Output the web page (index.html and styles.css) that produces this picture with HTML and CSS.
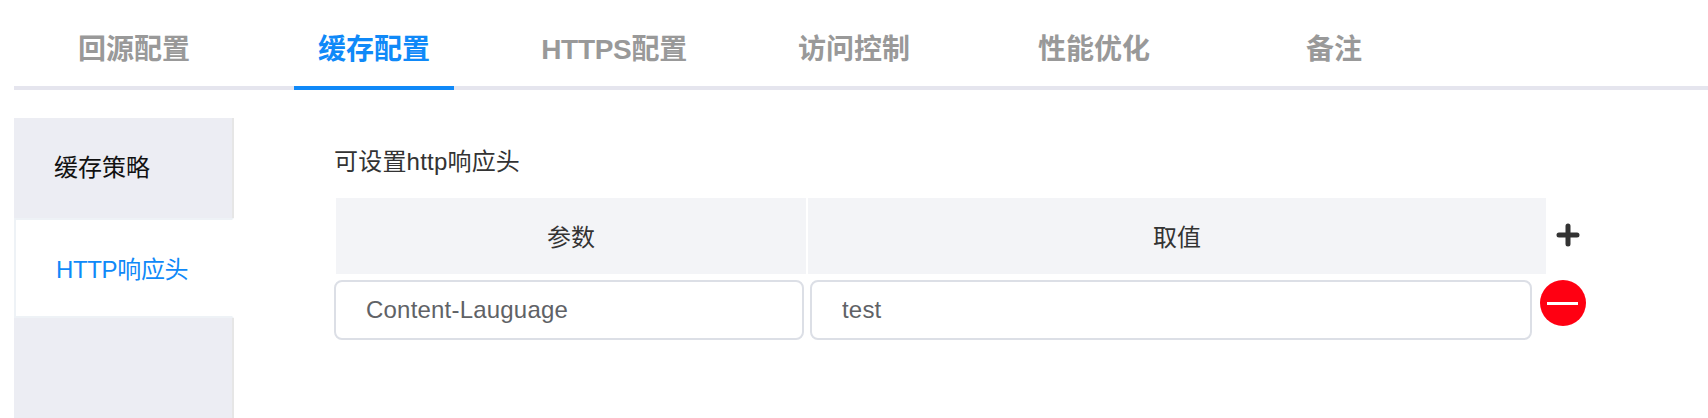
FILE: index.html
```
<!DOCTYPE html>
<html lang="zh-CN">
<head>
  <meta charset="UTF-8" />
  <meta name="viewport" content="width=device-width, initial-scale=1" />
  <title>缓存配置</title>
  <link rel="stylesheet" href="styles.css">
</head>
<body>

  <nav class="tabs">
    <a class="tab"><span>回源配置</span></a>
    <a class="tab active"><span>缓存配置</span></a>
    <a class="tab tab-https"><span>HTTPS配置</span></a>
    <a class="tab"><span>访问控制</span></a>
    <a class="tab"><span>性能优化</span></a>
    <a class="tab"><span>备注</span></a>
  </nav>

  <div class="main">
    <ul class="side-menu">
      <li class="side-item">缓存策略</li>
      <li class="side-item active">HTTP响应头</li>
    </ul>

    <div class="content">
      <p class="title">可设置http响应头</p>

      <div class="table-head">
        <div class="th th-name">参数</div>
        <div class="th th-value">取值</div>
        <svg class="icon-add" viewBox="0 0 24 24" width="24" height="24">
          <path d="M12 3v18M3 12h18" />
        </svg>
      </div>

      <div class="table-row">
        <input class="input input-name" type="text" value="Content-Lauguage" spellcheck="false">
        <input class="input input-value" type="text" value="test" spellcheck="false">
        <svg class="icon-remove" viewBox="0 0 46 46" width="46" height="46">
          <circle cx="23" cy="23" r="23" />
          <path d="M7 23.5h31" />
        </svg>
      </div>
    </div>
  </div>

</body>
</html>
```
FILE: styles.css
```
* {
  box-sizing: border-box;
}
body {
  margin: 0;
  height: 100vh;
  padding-left: 14px;
  display: flex;
  flex-direction: column;
  overflow: hidden;
  background: #fff;
  color: #333;
  font-family: "Liberation Sans", "Noto Sans CJK SC", sans-serif;
  font-size: 24px;
}

/* top tabs */
.tabs {
  display: flex;
  height: 90px;
  flex: none;
  background: linear-gradient(#e5e5ee, #e5e5ee) bottom / 100% 4px no-repeat;
}
.tab {
  width: 240px;
  display: flex;
  justify-content: center;
  color: #999;
  font-size: 28px;
  font-weight: bold;
}
.tab span {
  width: 160px;
  height: 90px;
  line-height: 99px;
  text-align: center;
  white-space: nowrap;
}
.tab-https span {
  letter-spacing: -0.3px;
}
.tab.active span {
  color: #0f89f8;
  border-bottom: 4px solid #0f89f8;
}

.main {
  display: flex;
  flex: 1;
  padding-top: 28px;
}

/* left menu */
.side-menu {
  width: 220px;
  margin: 0;
  padding: 0;
  list-style: none;
  background: linear-gradient(#e6e6e6, #e6e6e6) right / 2px 100% no-repeat #ecedf3;
}
.side-item {
  height: 100px;
  padding-left: 40px;
  line-height: 100px;
  color: #111;
}
.side-item.active {
  background: #fff;
  border: 2px solid #eef2f6;
  border-right-color: #fff;
  line-height: 100px;
  letter-spacing: -0.35px;
  color: #0f89f8;
}

/* response header form */
.content {
  margin-left: 100px;
}
.title {
  margin: 24px 0 0;
  height: 56px;
  line-height: 40px;
  letter-spacing: 0.2px;
}
.table-head {
  display: flex;
  align-items: center;
  padding-left: 2px;
  gap: 2px;
}
.th {
  height: 76px;
  line-height: 80px;
  text-align: center;
  background: #f3f4f7;
}
.th-name {
  width: 470px;
}
.th-value {
  width: 738px;
}
.icon-add {
  margin: 0 0 2px 8px;
  fill: none;
  stroke: #333;
  stroke-width: 5;
  stroke-linecap: round;
}
.table-row {
  display: flex;
  align-items: flex-start;
  margin-top: 6px;
}
.input {
  height: 60px;
  padding: 0 30px;
  border: 2px solid #dcdfe6;
  border-radius: 8px;
  background: #fff;
  color: #606266;
  font-family: inherit;
  font-size: 24px;
  letter-spacing: 0.2px;
  outline: none;
}
.input-name {
  width: 470px;
  margin-right: 6px;
}
.input-value {
  width: 722px;
  margin-right: 8px;
}
.icon-remove circle {
  fill: #ff0012;
}
.icon-remove path {
  stroke: #fff;
  stroke-width: 3;
}
```
